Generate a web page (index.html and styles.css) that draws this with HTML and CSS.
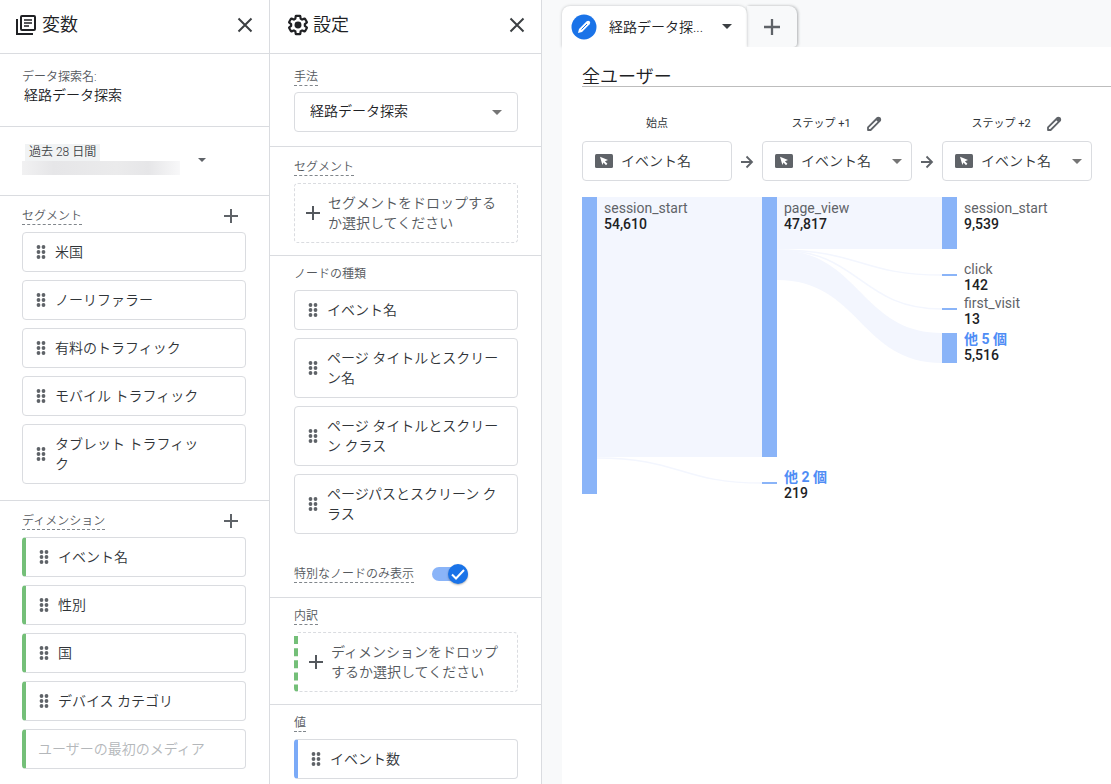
FILE: index.html
```html
<!DOCTYPE html>
<html lang="ja">
<head>
<meta charset="utf-8">
<title>経路データ探索</title>
<link rel="stylesheet" href="styles.css">
</head>
<body>
<svg class="defs" aria-hidden="true">
  <symbol id="close" viewBox="0 0 16 16"><path d="M1.5 1.5l13 13M14.5 1.5l-13 13" fill="none" stroke="currentColor" stroke-width="2"/></symbol>
  <symbol id="plus" viewBox="0 0 14 14"><path d="M7 0v14M0 7h14" fill="none" stroke="currentColor" stroke-width="2"/></symbol>
  <symbol id="caret" viewBox="0 0 10 5"><path d="M0 0h10L5 5z" fill="currentColor"/></symbol>
  <symbol id="arrow" viewBox="0 0 14 14"><path d="M1 7h11M6.500 1.500L12 7l-5.500 5.500" fill="none" stroke="currentColor" stroke-width="1.800"/></symbol>
  <symbol id="grip" viewBox="0 0 10 14"><g fill="currentColor"><circle cx="2.500" cy="2" r="1.900"/><circle cx="7.500" cy="2" r="1.900"/><circle cx="2.500" cy="7" r="1.900"/><circle cx="7.500" cy="7" r="1.900"/><circle cx="2.500" cy="12" r="1.900"/><circle cx="7.500" cy="12" r="1.900"/></g></symbol>
  <symbol id="pencil" viewBox="0 0 24 24"><path fill="none" stroke="currentColor" stroke-width="2.400" stroke-linejoin="round" d="M4 20v-3.500L16.500 4q1.200-1 2.500.2l.8.8q1.200 1.300.2 2.500L7.500 20z"/><path fill="currentColor" d="M14 6l3-3h3l1 1v3l-3 3z"/></symbol>
  <symbol id="event" viewBox="0 0 18 14"><rect width="18" height="14" rx="1.500" fill="#5f6368"/><path d="M5 2.700l8 3.300-3.100 1.200 2.500 2.600-1.400 1.400-2.500-2.600-1.100 2.500z" fill="#fff"/></symbol>
</svg>

<div class="app">
  <aside class="panel panel-vars">
    <header class="panel-head">
      <svg class="head-icon" viewBox="0 0 22 22"><g fill="none" stroke="#202124" stroke-width="2"><rect x="5" y="2" width="14" height="14" rx="1"/><path d="M1 5v15h16"/><path d="M8 6h8M8 9h8M8 12h5" stroke-width="1.700"/></g></svg>
      <h2>変数</h2>
      <button class="icon-btn" aria-label="閉じる"><svg class="i16"><use href="#close"/></svg></button>
    </header>
    <section class="name-block">
      <label class="plain-label" for="name">データ探索名:</label>
      <input id="name" class="name-input" value="経路データ探索">
    </section>
    <section class="date-block">
      <button class="date-btn">
        <span class="date-text"><span class="date-chip">過去 28 日間</span><span class="date-range"></span></span>
        <svg class="caret-small"><use href="#caret"/></svg>
      </button>
    </section>
    <section class="group">
      <div class="group-head"><h3 class="term">セグメント</h3><button class="icon-btn" aria-label="セグメントを追加"><svg class="i14"><use href="#plus"/></svg></button></div>
      <ul class="chips">
        <li class="chip"><svg class="grip"><use href="#grip"/></svg><span>米国</span></li>
        <li class="chip"><svg class="grip"><use href="#grip"/></svg><span>ノーリファラー</span></li>
        <li class="chip"><svg class="grip"><use href="#grip"/></svg><span>有料のトラフィック</span></li>
        <li class="chip"><svg class="grip"><use href="#grip"/></svg><span>モバイル トラフィック</span></li>
        <li class="chip"><svg class="grip"><use href="#grip"/></svg><span>タブレット トラフィック</span></li>
      </ul>
    </section>
    <section class="group last">
      <div class="group-head"><h3 class="term">ディメンション</h3><button class="icon-btn" aria-label="ディメンションを追加"><svg class="i14"><use href="#plus"/></svg></button></div>
      <ul class="chips">
        <li class="chip green"><svg class="grip"><use href="#grip"/></svg><span>イベント名</span></li>
        <li class="chip green"><svg class="grip"><use href="#grip"/></svg><span>性別</span></li>
        <li class="chip green"><svg class="grip"><use href="#grip"/></svg><span>国</span></li>
        <li class="chip green"><svg class="grip"><use href="#grip"/></svg><span>デバイス カテゴリ</span></li>
        <li class="chip green disabled"><span>ユーザーの最初のメディア</span></li>
      </ul>
    </section>
  </aside>

  <aside class="panel panel-settings">
    <header class="panel-head">
      <svg class="head-icon" viewBox="0 0 24 24"><path fill="none" stroke="#202124" stroke-width="2.400" stroke-linejoin="round" d="M19.430 12.980c.04-.32.07-.64.07-.98s-.03-.66-.07-.98l2.110-1.650c.19-.15.24-.42.12-.64l-2-3.460c-.09-.16-.26-.25-.44-.25-.06 0-.12.010-.17.030l-2.490 1c-.52-.4-1.080-.73-1.690-.98l-.38-2.650C14.460 2.180 14.250 2 14 2h-4c-.25 0-.46.18-.49.42l-.38 2.650c-.61.25-1.170.59-1.690.98l-2.490-1c-.06-.02-.12-.03-.18-.03-.17 0-.34.09-.43.25l-2 3.460c-.13.22-.07.49.12.64l2.110 1.650c-.04.32-.07.65-.07.98s.03.66.07.98l-2.110 1.650c-.19.15-.24.42-.12.64l2 3.460c.09.16.26.25.44.25.06 0 .12-.01.17-.03l2.490-1c.52.4 1.080.73 1.690.98l.38 2.650c.03.24.24.42.49.42h4c.25 0 .46-.18.49-.42l.38-2.650c.61-.25 1.170-.59 1.690-.98l2.490 1c.06.020.12.030.18.030.17 0 .34-.09.43-.25l2-3.460c.12-.22.07-.49-.12-.64z"/><circle cx="12" cy="12" r="3.800" fill="#202124"/></svg>
      <h2>設定</h2>
      <button class="icon-btn" aria-label="閉じる"><svg class="i16"><use href="#close"/></svg></button>
    </header>
    <section class="setting roomy">
      <div><label class="term" for="method">手法</label></div>
      <div class="select-box">
        <select id="method" class="method"><option>経路データ探索</option></select>
        <svg class="caret"><use href="#caret"/></svg>
      </div>
    </section>
    <section class="setting seg">
      <div><h3 class="term">セグメント</h3></div>
      <button class="drop"><svg class="i14"><use href="#plus"/></svg><span>セグメントをドロップするか選択してください</span></button>
    </section>
    <section class="setting nodes">
      <div><h3 class="plain-label">ノードの種類</h3></div>
      <ul class="chips wide">
        <li class="chip"><svg class="grip"><use href="#grip"/></svg><span>イベント名</span></li>
        <li class="chip"><svg class="grip"><use href="#grip"/></svg><span>ページ タイトルとスクリーン名</span></li>
        <li class="chip"><svg class="grip"><use href="#grip"/></svg><span>ページ タイトルとスクリーン クラス</span></li>
        <li class="chip"><svg class="grip"><use href="#grip"/></svg><span>ページパスとスクリーン クラス</span></li>
      </ul>
      <div class="toggle-row">
        <label class="term" for="unique">特別なノードのみ表示</label>
        <span class="toggle"><input id="unique" type="checkbox" checked><svg class="tick" viewBox="0 0 16 16"><path d="M2 8.500L6 12.500 14 4" fill="none" stroke="#fff" stroke-width="2"/></svg></span>
      </div>
    </section>
    <section class="setting">
      <div><h3 class="term">内訳</h3></div>
      <button class="drop green"><svg class="i14"><use href="#plus"/></svg><span>ディメンションをドロップするか選択してください</span></button>
    </section>
    <section class="setting last">
      <div><h3 class="term">値</h3></div>
      <ul class="chips wide"><li class="chip blue"><svg class="grip"><use href="#grip"/></svg><span>イベント数</span></li></ul>
    </section>
  </aside>

  <main class="canvas">
    <nav class="tabs">
      <button class="tab">
        <svg class="tab-icon" viewBox="0 0 26 26"><circle cx="13" cy="13" r="12.500" fill="#1a73e8"/><path d="M7 19l1-4 7.700-7.700q1.500-1.300 2.900 0 1.300 1.400 0 2.900L11 18z" fill="#fff"/><path d="M10.500 15.500l5.500-5.500" stroke="#1a73e8" stroke-width="1"/></svg>
        <span class="tab-name">経路データ探...</span>
        <svg class="caret"><use href="#caret"/></svg>
      </button>
      <button class="tab-add" aria-label="タブを追加"><svg class="i16"><use href="#plus"/></svg></button>
    </nav>
    <div class="sheet">
      <input class="sheet-title" aria-label="タブ名" value="全ユーザー">
      <div class="steps">
        <div class="step">
          <div class="step-head"><label for="s0">始点</label></div>
          <button id="s0" class="step-box"><svg class="event"><use href="#event"/></svg>イベント名</button>
        </div>
        <svg class="arrow"><use href="#arrow"/></svg>
        <div class="step">
          <div class="step-head"><label for="s1">ステップ +1</label><button class="icon-btn" aria-label="編集"><svg class="i18"><use href="#pencil"/></svg></button></div>
          <div class="select-box"><select id="s1" class="step-select"><option>イベント名</option></select><svg class="event over"><use href="#event"/></svg><svg class="caret"><use href="#caret"/></svg></div>
        </div>
        <svg class="arrow"><use href="#arrow"/></svg>
        <div class="step">
          <div class="step-head"><label for="s2">ステップ +2</label><button class="icon-btn" aria-label="編集"><svg class="i18"><use href="#pencil"/></svg></button></div>
          <div class="select-box"><select id="s2" class="step-select"><option>イベント名</option></select><svg class="event over"><use href="#event"/></svg><svg class="caret"><use href="#caret"/></svg></div>
        </div>
      </div>
      <svg class="flow" width="520" height="310" viewBox="0 0 520 310">
        <g fill="#f3f6fe">
          <path d="M15 0h165v260H15z"/>
          <path d="M195 0h165v52H195z"/>
          <path d="M195 53C278 53 278 136 360 136V166C278 166 278 83 195 83z"/>
        </g>
        <g fill="none" stroke="#f3f6fe" stroke-width="1.500">
          <path d="M15 261C98 261 98 286 180 286"/>
          <path d="M195 53C278 53 278 78 360 78"/>
          <path d="M195 53C278 53 278 112 360 112"/>
        </g>
        <g fill="#8ab4f8">
          <path d="M0 0h15v297H0z"/>
          <path d="M180 0h15v260h-15z"/>
          <path d="M180 285h15v2h-15z"/>
          <path d="M360 0h15v52h-15z"/>
          <path d="M360 77h15v2h-15z"/>
          <path d="M360 111h15v2h-15z"/>
          <path d="M360 136h15v30h-15z"/>
        </g>
        <g class="node-name">
          <text x="22" y="16">session_start</text>
          <text x="202" y="16">page_view</text>
          <text x="382" y="16">session_start</text>
          <text x="382" y="77">click</text>
          <text x="382" y="111">first_visit</text>
        </g>
        <g class="node-more">
          <text x="202" y="285">他 2 個</text>
          <text x="382" y="147">他 5 個</text>
        </g>
        <g class="node-count">
          <text x="22" y="32">54,610</text>
          <text x="202" y="32">47,817</text>
          <text x="202" y="301">219</text>
          <text x="382" y="32">9,539</text>
          <text x="382" y="93">142</text>
          <text x="382" y="127">13</text>
          <text x="382" y="163">5,516</text>
        </g>
      </svg>
    </div>
  </main>
</div>
</body>
</html>
```

FILE: styles.css
```css
* { box-sizing: border-box; }
body {
  margin: 0;
  height: 100vh;
  overflow: hidden;
  background: #f8f9fa;
  color: #303438;
  font: 350 14px/20px Roboto, "Noto Sans CJK JP", sans-serif;
}
h2, h3, ul { margin: 0; padding: 0; font-weight: inherit; }
ul { list-style: none; }
button, input, select { margin: 0; font: inherit; color: inherit; }
button { padding: 0; border: 0; background: none; text-align: left; }
svg { display: block; flex: none; }
.defs { position: absolute; width: 0; height: 0; }
.i14 { width: 14px; height: 14px; }
.i16 { width: 16px; height: 16px; }
.i18 { width: 18px; height: 18px; }
.icon-btn { flex: none; color: #5f6368; }

.app { display: grid; grid-template-columns: 270px 272px minmax(0, 1fr); height: 100%; }
.panel { background: #fff; border-right: 1px solid #dadce0; }
.panel-head {
  display: flex;
  align-items: center;
  gap: 4px;
  padding: 12px 16px 15px;
  border-bottom: 1px solid #dadce0;
  color: #202124;
}
.panel-settings .panel-head { padding-left: 17px; }
.panel-head h2 { flex: 1; font-size: 18px; line-height: 26px; }
.panel-head .icon-btn { color: #3c4043; }
.head-icon { width: 22px; height: 22px; }

.plain-label, .term { display: inline-block; font-size: 12px; line-height: 16px; color: #54585d; }
.term { border-bottom: 1px dashed #80868b; }

.name-block { padding: 15px 22px 21px; border-bottom: 1px solid #dadce0; }
.name-block .plain-label { display: block; }
.name-input { display: block; width: 100%; height: 20px; padding: 0 2px; border: 0; color: #202124; }
.date-block { padding: 17px 22px 20px; border-bottom: 1px solid #dadce0; }
.date-btn { display: flex; align-items: center; gap: 18px; width: 100%; color: #5f6368; }
.date-text { display: flex; flex-direction: column; align-items: flex-start; width: 158px; }
.date-chip { margin-left: 3px; padding: 0 4px; background: #f1f3f4; color: #3c4043; font-size: 12px; line-height: 17px; }
.date-range { width: 100%; height: 14px; background: linear-gradient(90deg, #f1f1f2, #e6e6e8 20%, #ebebec 60%, #e6e6e8 80%, #f8f8f9); }
.caret-small { width: 8px; height: 4px; }

.group { padding: 10px 23px 16px 22px; border-bottom: 1px solid #dadce0; }
.last.last { border-bottom: 0; }
.group-head { display: flex; justify-content: space-between; align-items: center; height: 20px; margin-bottom: 6px; padding-right: 8px; }

.chips { display: grid; gap: 8px; }
.chip {
  display: flex;
  align-items: center;
  gap: 9px;
  min-height: 40px;
  padding: 9px 34px 9px 13px;
  border: 1px solid #dadce0;
  border-radius: 4px;
}
.wide .chip { padding-right: 10px; }
.chip.green { border-left: 4px solid #74bf78; }
.chip.blue { border-left: 4px solid #7baaf7; }
.disabled { color: #b4b7ba; padding-left: 12px; }
.grip { width: 10px; height: 14px; color: #5f6368; }

.setting { padding: 10px 23px 12px 24px; border-bottom: 1px solid #dadce0; }
.setting > div:first-child { display: flex; align-items: flex-start; height: 24px; }
.setting.seg { padding-top: 12px; }
.setting.nodes { padding-bottom: 11px; }
.setting.roomy { padding: 15px 23px 14px 24px; }
.setting.roomy > div:first-child { height: 23px; }
.drop {
  display: flex;
  align-items: center;
  gap: 8px;
  width: 100%;
  padding: 9px 10px 9px 11px;
  border: 1px dashed #dadce0;
  border-radius: 4px;
  color: #54585d;
}
.drop.green { border-left: 4px dashed #74bf78; }
.toggle-row { display: flex; align-items: center; gap: 18px; margin-top: 28px; }
.toggle { position: relative; width: 36px; height: 24px; display: flex; align-items: center; }
.toggle input { appearance: none; width: 36px; height: 14px; margin: 0; border-radius: 7px; background: #8ab4f8; }
.toggle input::before {
  content: "";
  position: absolute;
  top: 2px;
  right: 0;
  width: 20px;
  height: 20px;
  border-radius: 50%;
  background: #1a73e8;
  box-shadow: 0 1px 2px rgba(60, 64, 67, .4);
}
.tick { position: absolute; top: 4px; right: 2px; width: 16px; height: 16px; pointer-events: none; }

.select-box { position: relative; }
.select-box select {
  display: block;
  appearance: none;
  width: 100%;
  height: 40px;
  border: 1px solid #dadce0;
  border-radius: 4px;
  background: #fff;
}
.select-box .method { padding: 0 15px 2px; color: #202124; }
.select-box .step-select { padding: 0 24px 0 38px; }
.caret { width: 10px; height: 5px; color: #757575; }
.select-box .caret { position: absolute; top: 18px; right: 10px; pointer-events: none; }
.select-box .method + .caret { right: 16px; }

.canvas { display: flex; flex-direction: column; padding: 6px 0 0 20px; }
.tabs { display: flex; height: 41px; }
.tab {
  display: flex;
  align-items: center;
  width: 185px;
  padding: 0 15px 0 9px;
  border-radius: 8px 8px 0 0;
  background: #fff;
  box-shadow: 0 0 3px rgba(60, 64, 67, .3);
  color: #202124;
}
.tab-icon { width: 26px; height: 26px; margin-right: 12px; }
.tab-name { flex: 1; white-space: nowrap; }
.tab .caret { color: #3c4043; }
.tab-add {
  display: grid;
  place-items: center;
  width: 50px;
  border-radius: 0 8px 4px 0;
  box-shadow: 1px 0 3px rgba(60, 64, 67, .4);
  color: #5f6368;
}
.sheet { position: relative; flex: 1; padding: 16px 0 0 20px; background: #fff; }
.sheet-title {
  display: block;
  width: 100%;
  height: 24px;
  padding: 0;
  border: 0;
  border-bottom: 1px solid #bdbdbd;
  font-size: 18px;
  color: #202124;
}
.steps { display: flex; align-items: flex-end; margin-top: 25px; }
.step { flex: none; width: 150px; }
.step-head { display: flex; justify-content: center; align-items: center; gap: 14px; height: 24px; margin-bottom: 5px; font-size: 11px; font-weight: 400; }
.step-box { display: flex; align-items: center; gap: 8px; width: 100%; height: 40px; padding: 0 12px; border: 1px solid #dadce0; border-radius: 4px; }
.event { width: 18px; height: 14px; }
.event.over { position: absolute; top: 13px; left: 13px; pointer-events: none; }
.arrow { width: 14px; height: 14px; margin: 0 8px 12px; color: #5f6368; }
.flow { margin-top: 16px; }
.node-name { fill: #5f6368; font-weight: 400; }
.node-more { fill: #4f8df5; font-weight: 700; }
.node-count { fill: #202124; font-weight: 500; }
```
